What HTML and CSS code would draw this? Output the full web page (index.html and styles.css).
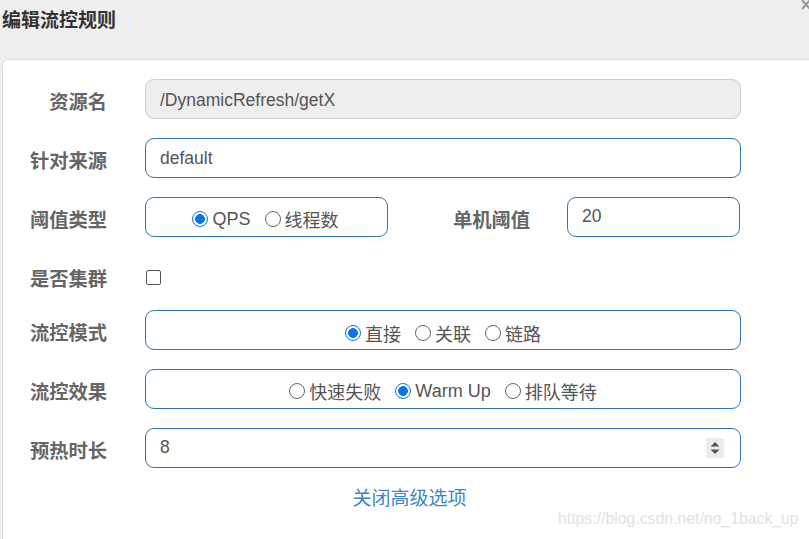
FILE: index.html
```html
<!DOCTYPE html>
<html lang="zh">
<head>
<meta charset="utf-8">
<link rel="stylesheet" href="styles.css">
</head>
<body>
<div class="modal">
  <div class="header">
    <h4 class="title">编辑流控规则</h4>
    <svg class="close" width="10" height="12" viewBox="0 0 10 12"><path d="M3 1 L11 10 M11 1 L3 10" stroke="#9a9a9a" stroke-width="2"/></svg>
  </div>
  <div class="card">
    <div class="row">
      <label class="label">资源名</label>
      <div class="field disabled">/DynamicRefresh/getX</div>
    </div>
    <div class="row">
      <label class="label">针对来源</label>
      <div class="field">default</div>
    </div>
    <div class="row">
      <label class="label">阈值类型</label>
      <div class="field group small">
        <span class="opt"><span class="radio on"></span>QPS</span>
        <span class="opt"><span class="radio"></span>线程数</span>
      </div>
      <label class="label label2">单机阈值</label>
      <div class="field num">20</div>
    </div>
    <div class="row short">
      <label class="label">是否集群</label>
      <span class="checkbox"></span>
    </div>
    <div class="row">
      <label class="label">流控模式</label>
      <div class="field group">
        <span class="opt"><span class="radio on"></span>直接</span>
        <span class="opt"><span class="radio"></span>关联</span>
        <span class="opt"><span class="radio"></span>链路</span>
      </div>
    </div>
    <div class="row">
      <label class="label">流控效果</label>
      <div class="field group">
        <span class="opt"><span class="radio"></span>快速失败</span>
        <span class="opt"><span class="radio on"></span>Warm Up</span>
        <span class="opt"><span class="radio"></span>排队等待</span>
      </div>
    </div>
    <div class="row">
      <label class="label">预热时长</label>
      <div class="field spin">
        <span class="val">8</span>
        <span class="spinner">
          <svg width="18" height="20" viewBox="0 0 18 20"><rect width="18" height="20" fill="#ececec"/><path d="M4.5 8.5 L9 4 L13.5 8.5 Z M4.5 11.5 L9 16 L13.5 11.5 Z" fill="#555"/></svg>
        </span>
      </div>
    </div>
    <div class="linkrow"><a class="link">关闭高级选项</a></div>
  </div>
</div>
<div class="watermark">https://blog.csdn.net/no_1back_up</div>
</body>
</html>
```
FILE: styles.css
```css
html, body {
  margin: 0;
  padding: 0;
  width: 809px;
  height: 539px;
  overflow: hidden;
  background: #efefef;
  font-family: "Liberation Sans", "Noto Sans CJK SC", sans-serif;
}
.modal {
  position: relative;
  width: 809px;
  height: 539px;
  overflow: hidden;
}
.header {
  height: 59px;
  display: flex;
  align-items: flex-start;
}
.title {
  margin: 5px 0 0 2px;
  font-size: 19px;
  font-weight: bold;
  color: #333;
  line-height: 28px;
  font-family: "Noto Sans CJK SC", sans-serif;
}
.close {
  position: absolute;
  right: 0;
  top: -1px;
}
.card {
  margin-left: 2px;
  width: 807px;
  height: 480px;
  box-sizing: border-box;
  background: #fff;
  border: 1px solid #dcdcdc;
  border-right: none;
  border-bottom: none;
  border-radius: 6px 0 0 0;
  padding-top: 19px;
  display: flex;
  flex-direction: column;
  gap: 18.8px;
}
.row {
  display: flex;
  align-items: center;
  height: 40px;
}
.row.short {
  height: 36px;
  box-sizing: border-box;
  padding-top: 6px;
}
.label {
  width: 104px;
  text-align: right;
  font-family: "Noto Sans CJK SC", sans-serif;
  font-weight: bold;
  font-size: 19.3px;
  color: #666;
  margin-right: 38px;
  flex-shrink: 0;
  padding-top: 4px;
}
.label2 {
  width: 142px;
  margin-right: 37px;
}
.field {
  box-sizing: border-box;
  width: 596px;
  height: 40px;
  border: 1px solid #2f74b5;
  border-radius: 9px;
  padding: 2px 14px 0;
  display: flex;
  align-items: center;
  font-size: 17.5px;
  color: #555;
  flex-shrink: 0;
}
.field.disabled {
  background: #eee;
  border-color: #ccc;
}
.field.group {
  justify-content: center;
  gap: 14px;
  padding: 0;
  width: 596px;
  font-size: 18px;
  font-family: "Liberation Sans", "Noto Sans CJK SC", sans-serif;
  padding-top: 5px;
}
.field.group.small {
  width: 243px;
  padding-right: 2px;
}
.field.num {
  width: 173px;
  padding-top: 0;
  padding-bottom: 1px;
}
.opt {
  display: inline-flex;
  align-items: center;
  gap: 4px;
  white-space: nowrap;
}
.radio {
  width: 16px;
  height: 16px;
  box-sizing: border-box;
  border: 1px solid #666;
  border-radius: 50%;
  display: inline-block;
  background: #fff;
}
.radio.on {
  border: 1.5px solid #0a75e8;
  background: radial-gradient(circle, #0a75e8 0 4.6px, #fff 5.1px);
}
.checkbox {
  width: 15px;
  height: 15px;
  box-sizing: border-box;
  border: 1px solid #555;
  border-radius: 2px;
  margin-left: 1px;
  margin-top: 2px;
}
.field.spin {
  justify-content: space-between;
  padding-top: 0;
  padding-right: 16px;
  padding-bottom: 1px;
}
.spinner {
  display: flex;
  margin-top: 2px;
}
.linkrow {
  text-align: center;
  width: 809px;
  margin-top: -4px;
  margin-left: -2px;
  padding-left: 4px;
}
.link {
  color: #3a88c9;
  font-size: 19px;
  font-family: "Noto Sans CJK SC", sans-serif;
  cursor: pointer;
}
.watermark {
  position: absolute;
  left: 558px;
  top: 510px;
  font-size: 15.8px;
  color: #e2e2e2;
  font-family: "Liberation Sans", sans-serif;
}
```
